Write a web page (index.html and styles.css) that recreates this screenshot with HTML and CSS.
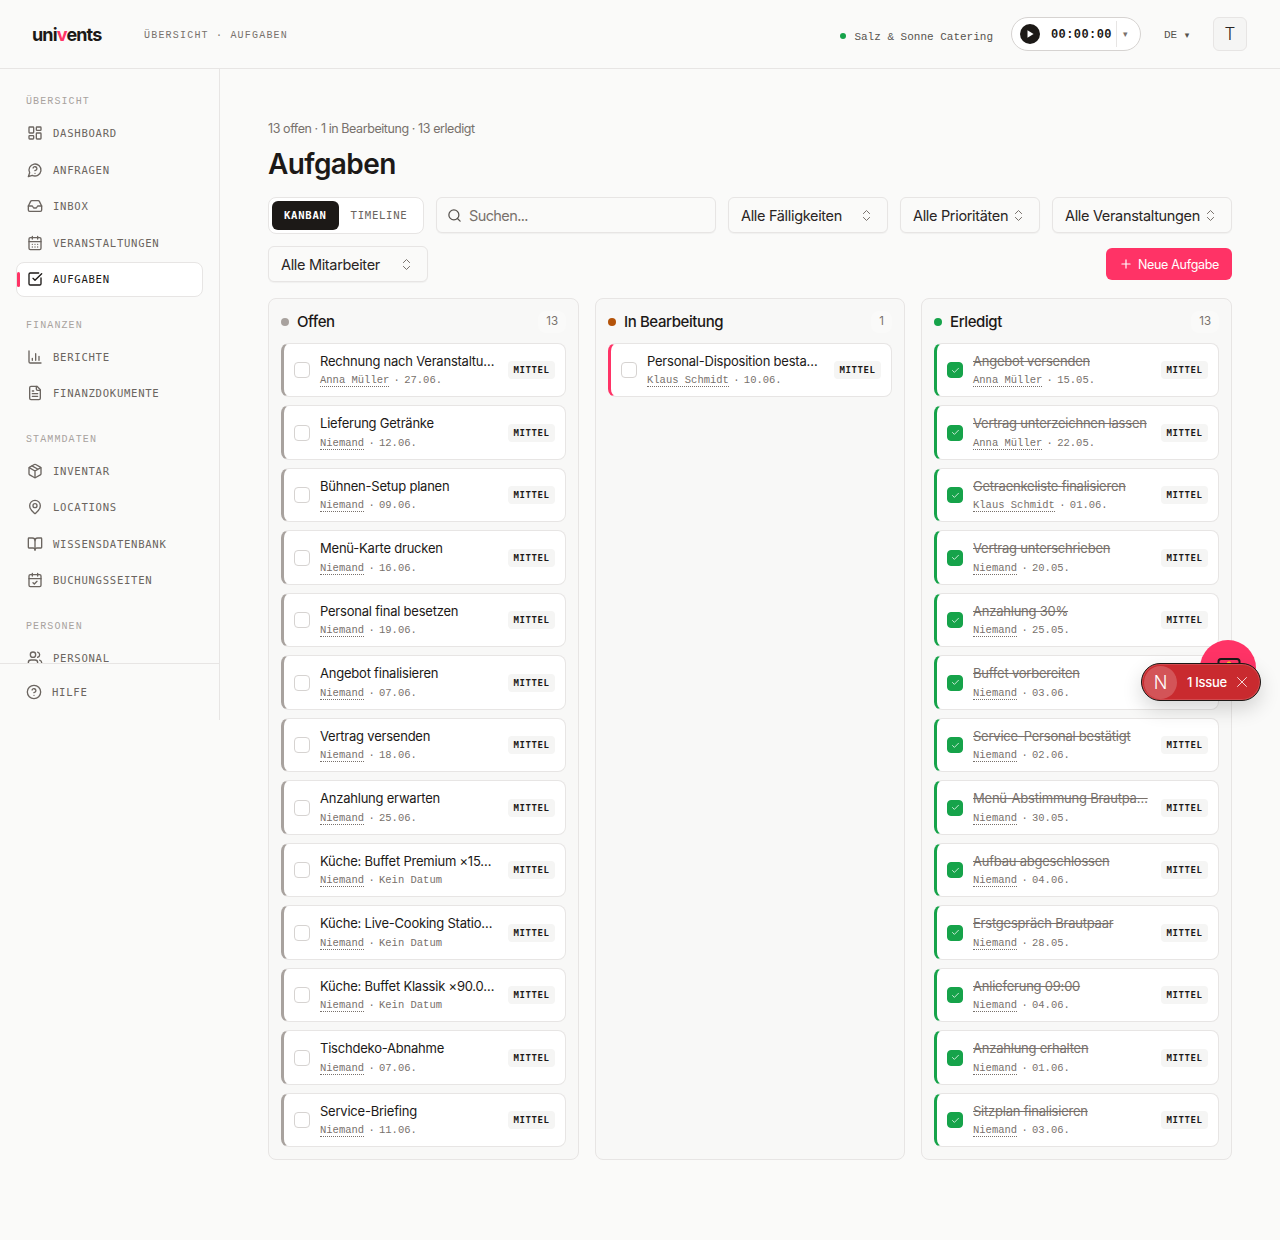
FILE: index.html
```html
<!DOCTYPE html>
<html lang="de">
<head>
<meta charset="utf-8">
<title>Aufgaben</title>
<link rel="stylesheet" href="styles.css">
</head>
<body>
<svg class="defs" width="0" height="0" aria-hidden="true">
  <symbol id="i-dash" viewBox="0 0 24 24"><rect x="3" y="3" width="7" height="9" rx="1"/><rect x="14" y="3" width="7" height="5" rx="1"/><rect x="14" y="12" width="7" height="9" rx="1"/><rect x="3" y="16" width="7" height="5" rx="1"/></symbol>
  <symbol id="i-ask" viewBox="0 0 24 24"><path d="M7.9 20A9 9 0 1 0 4 16.1L2 22Z"/><path d="M9.1 9a3 3 0 0 1 5.8 1c0 2-3 3-3 3"/><path d="M12 17h.01"/></symbol>
  <symbol id="i-inbox" viewBox="0 0 24 24"><path d="M22 12h-6l-2 3h-4l-2-3H2"/><path d="M5.45 5.11 2 12v6a2 2 0 0 0 2 2h16a2 2 0 0 0 2-2v-6l-3.45-6.89A2 2 0 0 0 16.76 4H7.24a2 2 0 0 0-1.79 1.11z"/></symbol>
  <symbol id="i-cal" viewBox="0 0 24 24"><rect x="3" y="4" width="18" height="18" rx="2"/><path d="M8 2v4M16 2v4M3 10h18M8 14h.01M12 14h.01M16 14h.01M8 18h.01M12 18h.01M16 18h.01"/></symbol>
  <symbol id="i-task" viewBox="0 0 24 24"><path d="M21 10.5V19a2 2 0 0 1-2 2H5a2 2 0 0 1-2-2V5a2 2 0 0 1 2-2h12.5"/><path d="m9 11 3 3L22 4"/></symbol>
  <symbol id="i-chart" viewBox="0 0 24 24"><path d="M3 3v16a2 2 0 0 0 2 2h16"/><path d="M8 17v-3M13 17V7M18 17V11"/></symbol>
  <symbol id="i-file" viewBox="0 0 24 24"><path d="M15 2H6a2 2 0 0 0-2 2v16a2 2 0 0 0 2 2h12a2 2 0 0 0 2-2V7Z"/><path d="M14 2v4a2 2 0 0 0 2 2h4M10 9H8M16 13H8M16 17H8"/></symbol>
  <symbol id="i-box" viewBox="0 0 24 24"><path d="M11 21.73a2 2 0 0 0 2 0l7-4A2 2 0 0 0 21 16V8a2 2 0 0 0-1-1.73l-7-4a2 2 0 0 0-2 0l-7 4A2 2 0 0 0 3 8v8a2 2 0 0 0 1 1.73z"/><path d="M12 22V12M3.29 7 12 12l8.71-5M7.5 4.27l9 5.15"/></symbol>
  <symbol id="i-pin" viewBox="0 0 24 24"><path d="M20 10c0 5-5.5 10.2-7.4 11.8a1 1 0 0 1-1.2 0C9.5 20.2 4 15 4 10a8 8 0 0 1 16 0"/><circle cx="12" cy="10" r="3"/></symbol>
  <symbol id="i-book" viewBox="0 0 24 24"><path d="M12 7v14"/><path d="M3 18a1 1 0 0 1-1-1V4a1 1 0 0 1 1-1h5a4 4 0 0 1 4 4 4 4 0 0 1 4-4h5a1 1 0 0 1 1 1v13a1 1 0 0 1-1 1h-6a3 3 0 0 0-3 3 3 3 0 0 0-3-3z"/></symbol>
  <symbol id="i-calc" viewBox="0 0 24 24"><rect x="3" y="4" width="18" height="18" rx="2"/><path d="M8 2v4M16 2v4M3 10h18M9 16l2 2 4-4"/></symbol>
  <symbol id="i-users" viewBox="0 0 24 24"><path d="M16 21v-2a4 4 0 0 0-4-4H6a4 4 0 0 0-4 4v2"/><circle cx="9" cy="7" r="4"/><path d="M22 21v-2a4 4 0 0 0-3-3.87M16 3.13a4 4 0 0 1 0 7.75"/></symbol>
  <symbol id="i-help" viewBox="0 0 24 24"><circle cx="12" cy="12" r="10"/><path d="M9.1 9a3 3 0 0 1 5.8 1c0 2-3 3-3 3M12 17h.01"/></symbol>
  <symbol id="i-updown" viewBox="0 0 24 24"><path d="m7 15 5 5 5-5M7 9l5-5 5 5"/></symbol>
  <symbol id="i-check" viewBox="0 0 24 24"><path d="M20 6 9 17l-5-5"/></symbol>
</svg>

<header class="topbar">
  <div class="logo">uni<span class="logo-v">v</span>ents</div>
  <div class="crumbs">ÜBERSICHT · AUFGABEN</div>
  <div class="topbar-right">
    <span class="org-dot"></span>
    <span class="org">Salz &amp; Sonne Catering</span>
    <div class="timer">
      <span class="play"><svg viewBox="0 0 10 10" width="10" height="10"><path class="play-tri" d="M2.5 1.2 8.6 5 2.5 8.8Z"/></svg></span>
      <span class="time">00:00:00</span>
      <span class="timer-caret">▾</span>
    </div>
    <div class="lang">DE <span class="lang-caret">▾</span></div>
    <div class="avatar">T</div>
  </div>
</header>

<div class="layout">
  <aside class="sidebar">
    <nav class="nav">
      <div class="nav-label nav-label-first">ÜBERSICHT</div>
      <a class="nav-item"><svg class="ico"><use href="#i-dash"/></svg>DASHBOARD</a>
      <a class="nav-item"><svg class="ico"><use href="#i-ask"/></svg>ANFRAGEN</a>
      <a class="nav-item"><svg class="ico"><use href="#i-inbox"/></svg>INBOX</a>
      <a class="nav-item"><svg class="ico"><use href="#i-cal"/></svg>VERANSTALTUNGEN</a>
      <a class="nav-item active"><svg class="ico"><use href="#i-task"/></svg>AUFGABEN</a>
      <div class="nav-label">FINANZEN</div>
      <a class="nav-item"><svg class="ico"><use href="#i-chart"/></svg>BERICHTE</a>
      <a class="nav-item"><svg class="ico"><use href="#i-file"/></svg>FINANZDOKUMENTE</a>
      <div class="nav-label">STAMMDATEN</div>
      <a class="nav-item"><svg class="ico"><use href="#i-box"/></svg>INVENTAR</a>
      <a class="nav-item"><svg class="ico"><use href="#i-pin"/></svg>LOCATIONS</a>
      <a class="nav-item"><svg class="ico"><use href="#i-book"/></svg>WISSENSDATENBANK</a>
      <a class="nav-item"><svg class="ico"><use href="#i-calc"/></svg>BUCHUNGSSEITEN</a>
      <div class="nav-label">PERSONEN</div>
      <a class="nav-item"><svg class="ico"><use href="#i-users"/></svg>PERSONAL</a>
    </nav>
    <div class="side-foot">
      <a class="nav-item foot-item"><svg class="ico"><use href="#i-help"/></svg>HILFE</a>
    </div>
  </aside>

  <main class="main">
    <p class="summary">13 offen · 1 in Bearbeitung · 13 erledigt</p>
    <h1 class="title">Aufgaben</h1>

    <div class="toolbar">
      <div class="toggle"><span class="tab tab-on">KANBAN</span><span class="tab">TIMELINE</span></div>
      <label class="search">
        <svg class="search-ico" viewBox="0 0 24 24"><circle cx="11" cy="11" r="8"/><path d="m21 21-4.3-4.3"/></svg>
        <span class="search-ph">Suchen...</span>
      </label>
      <div class="select sel-due">Alle Fälligkeiten<svg class="updown"><use href="#i-updown"/></svg></div>
      <div class="select sel-prio">Alle Prioritäten<svg class="updown"><use href="#i-updown"/></svg></div>
      <div class="select sel-event">Alle Veranstaltungen<svg class="updown"><use href="#i-updown"/></svg></div>
      <div class="select sel-staff">Alle Mitarbeiter<svg class="updown"><use href="#i-updown"/></svg></div>
      <button class="new-btn"><svg class="plus" viewBox="0 0 24 24"><path d="M5 12h14M12 5v14"/></svg>Neue Aufgabe</button>
    </div>

    <div class="board">
      <section class="col">
        <div class="col-head"><span class="dot dot-open"></span><span class="col-name">Offen</span><span class="count">13</span></div>
        <div class="cards">
          <article class="card open"><span class="box"></span><div class="body"><div class="t">Rechnung nach Veranstaltu…</div><div class="m"><span class="who">Anna Müller</span><span class="sep"> · </span>27.06.</div></div><span class="badge">MITTEL</span></article>
          <article class="card open"><span class="box"></span><div class="body"><div class="t">Lieferung Getränke</div><div class="m"><span class="who">Niemand</span><span class="sep"> · </span>12.06.</div></div><span class="badge">MITTEL</span></article>
          <article class="card open"><span class="box"></span><div class="body"><div class="t">Bühnen-Setup planen</div><div class="m"><span class="who">Niemand</span><span class="sep"> · </span>09.06.</div></div><span class="badge">MITTEL</span></article>
          <article class="card open"><span class="box"></span><div class="body"><div class="t">Menü-Karte drucken</div><div class="m"><span class="who">Niemand</span><span class="sep"> · </span>16.06.</div></div><span class="badge">MITTEL</span></article>
          <article class="card open"><span class="box"></span><div class="body"><div class="t">Personal final besetzen</div><div class="m"><span class="who">Niemand</span><span class="sep"> · </span>19.06.</div></div><span class="badge">MITTEL</span></article>
          <article class="card open"><span class="box"></span><div class="body"><div class="t">Angebot finalisieren</div><div class="m"><span class="who">Niemand</span><span class="sep"> · </span>07.06.</div></div><span class="badge">MITTEL</span></article>
          <article class="card open"><span class="box"></span><div class="body"><div class="t">Vertrag versenden</div><div class="m"><span class="who">Niemand</span><span class="sep"> · </span>18.06.</div></div><span class="badge">MITTEL</span></article>
          <article class="card open"><span class="box"></span><div class="body"><div class="t">Anzahlung erwarten</div><div class="m"><span class="who">Niemand</span><span class="sep"> · </span>25.06.</div></div><span class="badge">MITTEL</span></article>
          <article class="card open"><span class="box"></span><div class="body"><div class="t">Küche: Buffet Premium ×15…</div><div class="m"><span class="who">Niemand</span><span class="sep"> · </span>Kein Datum</div></div><span class="badge">MITTEL</span></article>
          <article class="card open"><span class="box"></span><div class="body"><div class="t">Küche: Live-Cooking Statio…</div><div class="m"><span class="who">Niemand</span><span class="sep"> · </span>Kein Datum</div></div><span class="badge">MITTEL</span></article>
          <article class="card open"><span class="box"></span><div class="body"><div class="t">Küche: Buffet Klassik ×90.0…</div><div class="m"><span class="who">Niemand</span><span class="sep"> · </span>Kein Datum</div></div><span class="badge">MITTEL</span></article>
          <article class="card open"><span class="box"></span><div class="body"><div class="t">Tischdeko-Abnahme</div><div class="m"><span class="who">Niemand</span><span class="sep"> · </span>07.06.</div></div><span class="badge">MITTEL</span></article>
          <article class="card open"><span class="box"></span><div class="body"><div class="t">Service-Briefing</div><div class="m"><span class="who">Niemand</span><span class="sep"> · </span>11.06.</div></div><span class="badge">MITTEL</span></article>
        </div>
      </section>

      <section class="col">
        <div class="col-head"><span class="dot dot-prog"></span><span class="col-name">In Bearbeitung</span><span class="count">1</span></div>
        <div class="cards">
          <article class="card prog"><span class="box"></span><div class="body"><div class="t">Personal-Disposition besta…</div><div class="m"><span class="who">Klaus Schmidt</span><span class="sep"> · </span>10.06.</div></div><span class="badge">MITTEL</span></article>
        </div>
      </section>

      <section class="col">
        <div class="col-head"><span class="dot dot-done"></span><span class="col-name">Erledigt</span><span class="count">13</span></div>
        <div class="cards">
          <article class="card done"><span class="box on"><svg class="tick"><use href="#i-check"/></svg></span><div class="body"><div class="t">Angebot versenden</div><div class="m"><span class="who">Anna Müller</span><span class="sep"> · </span>15.05.</div></div><span class="badge">MITTEL</span></article>
          <article class="card done"><span class="box on"><svg class="tick"><use href="#i-check"/></svg></span><div class="body"><div class="t">Vertrag unterzeichnen lassen</div><div class="m"><span class="who">Anna Müller</span><span class="sep"> · </span>22.05.</div></div><span class="badge">MITTEL</span></article>
          <article class="card done"><span class="box on"><svg class="tick"><use href="#i-check"/></svg></span><div class="body"><div class="t">Getraenkeliste finalisieren</div><div class="m"><span class="who">Klaus Schmidt</span><span class="sep"> · </span>01.06.</div></div><span class="badge">MITTEL</span></article>
          <article class="card done"><span class="box on"><svg class="tick"><use href="#i-check"/></svg></span><div class="body"><div class="t">Vertrag unterschrieben</div><div class="m"><span class="who">Niemand</span><span class="sep"> · </span>20.05.</div></div><span class="badge">MITTEL</span></article>
          <article class="card done"><span class="box on"><svg class="tick"><use href="#i-check"/></svg></span><div class="body"><div class="t">Anzahlung 30%</div><div class="m"><span class="who">Niemand</span><span class="sep"> · </span>25.05.</div></div><span class="badge">MITTEL</span></article>
          <article class="card done"><span class="box on"><svg class="tick"><use href="#i-check"/></svg></span><div class="body"><div class="t">Buffet vorbereiten</div><div class="m"><span class="who">Niemand</span><span class="sep"> · </span>03.06.</div></div><span class="badge">MITTEL</span></article>
          <article class="card done"><span class="box on"><svg class="tick"><use href="#i-check"/></svg></span><div class="body"><div class="t">Service-Personal bestätigt</div><div class="m"><span class="who">Niemand</span><span class="sep"> · </span>02.06.</div></div><span class="badge">MITTEL</span></article>
          <article class="card done"><span class="box on"><svg class="tick"><use href="#i-check"/></svg></span><div class="body"><div class="t">Menü-Abstimmung Brautpa…</div><div class="m"><span class="who">Niemand</span><span class="sep"> · </span>30.05.</div></div><span class="badge">MITTEL</span></article>
          <article class="card done"><span class="box on"><svg class="tick"><use href="#i-check"/></svg></span><div class="body"><div class="t">Aufbau abgeschlossen</div><div class="m"><span class="who">Niemand</span><span class="sep"> · </span>04.06.</div></div><span class="badge">MITTEL</span></article>
          <article class="card done"><span class="box on"><svg class="tick"><use href="#i-check"/></svg></span><div class="body"><div class="t">Erstgespräch Brautpaar</div><div class="m"><span class="who">Niemand</span><span class="sep"> · </span>28.05.</div></div><span class="badge">MITTEL</span></article>
          <article class="card done"><span class="box on"><svg class="tick"><use href="#i-check"/></svg></span><div class="body"><div class="t">Anlieferung 09:00</div><div class="m"><span class="who">Niemand</span><span class="sep"> · </span>04.06.</div></div><span class="badge">MITTEL</span></article>
          <article class="card done"><span class="box on"><svg class="tick"><use href="#i-check"/></svg></span><div class="body"><div class="t">Anzahlung erhalten</div><div class="m"><span class="who">Niemand</span><span class="sep"> · </span>01.06.</div></div><span class="badge">MITTEL</span></article>
          <article class="card done"><span class="box on"><svg class="tick"><use href="#i-check"/></svg></span><div class="body"><div class="t">Sitzplan finalisieren</div><div class="m"><span class="who">Niemand</span><span class="sep"> · </span>03.06.</div></div><span class="badge">MITTEL</span></article>
        </div>
      </section>
    </div>
  </main>
</div>

<div class="fab">
  <svg class="fab-ico" viewBox="0 0 24 24"><rect x="1.5" y="3" width="21" height="18" rx="2.5"/><path class="fab-spark" d="M12 5.5v3M10 7h4"/></svg>
</div>
<div class="issue">
  <span class="issue-n">N</span>
  <span class="issue-text">1 Issue</span>
  <svg class="issue-x" viewBox="0 0 24 24"><path d="M3 3l18 18M21 3 3 21"/></svg>
</div>
</body>
</html>
```
FILE: styles.css
```css
* { box-sizing: border-box; }
html, body { margin: 0; height: 1240px; overflow: hidden; }
body {
  position: relative;
  background: #fafaf9;
  color: #1c1917;
  font-family: Inter, "Liberation Sans", sans-serif;
}
.defs { position: absolute; }

.topbar {
  height: 69px;
  display: flex;
  align-items: center;
  padding: 0 33px 0 32px;
  border-bottom: 1px solid #e7e5e4;
}
.logo { width: 112px; font-size: 18px; font-weight: 700; letter-spacing: -0.85px; color: #1c1917; }
.logo-v { color: #ff3366; }
.crumbs { margin-top: 2px; font: 10px "Liberation Mono", monospace; letter-spacing: 1.2px; color: #78716c; }
.topbar-right { margin-left: auto; display: flex; align-items: center; }
.org-dot { width: 6px; height: 6px; border-radius: 50%; background: #16a34a; margin: 4px 8px 0 0; }
.org { font: 11px "Liberation Mono", monospace; color: #57534e; margin-top: 5px; }
.timer {
  margin-left: 18px;
  width: 130px; height: 34px;
  display: flex; align-items: center;
  padding-left: 8px;
  border: 1px solid #d6d3d1;
  border-radius: 17px;
  background: #fff;
}
.play { width: 20px; height: 20px; border-radius: 50%; background: #1c1917; display: flex; align-items: center; justify-content: center; }
.play-tri { fill: #fff; }
.time { margin-left: 11px; font: 700 12px/28px "Liberation Mono", monospace; letter-spacing: .42px; color: #1c1917; width: 66px; height: 26px; border-right: 1px solid #e7e5e4; }
.timer-caret { margin-left: 6px; font: 9px "DejaVu Sans", sans-serif; color: #78716c; }
.lang { margin: 2px 0 0 23px; width: 49px; font: 11px "Liberation Mono", monospace; color: #57534e; }
.lang-caret { font: 9px "DejaVu Sans", sans-serif; margin-left: 1px; }
.avatar {
  width: 34px; height: 34px;
  display: flex; align-items: center; justify-content: center;
  border: 1px solid #e7e5e4; border-radius: 6px;
  background: #f5f5f4; font-size: 17px; font-weight: 300; color: #292524;
}

.layout { display: flex; align-items: flex-start; }
.sidebar {
  width: 220px; height: 651px;
  flex: none;
  display: flex; flex-direction: column;
  border-right: 1px solid #e7e5e4;
}
.nav { height: 594px; flex: none; padding: 0 16px; overflow: hidden; }
.nav-label {
  height: 14px;
  margin: 22.5px 0 6px 10px;
  font: 10px/14px "Liberation Mono", monospace; letter-spacing: 1.1px; color: #a8a29e;
}
.nav-label-first { margin-top: 26px; margin-bottom: 6.5px; }
.nav-item {
  height: 35px; margin-bottom: 1.5px;
  display: flex; align-items: center; gap: 10px;
  padding-left: 10px;
  border: 1px solid transparent;
  border-radius: 8px;
  font: 10.6px "DejaVu Sans Mono", monospace; letter-spacing: .72px; color: #6b6560;
  position: relative;
}
.ico { width: 16px; height: 16px; flex: none; fill: none; stroke: currentColor; stroke-width: 2; stroke-linecap: round; stroke-linejoin: round; }
.nav-item.active { background: #fff; border-color: #e7e5e4; color: #1c1917; }
.nav-item.active::before {
  content: ""; position: absolute; left: 0; top: 9px;
  width: 3px; height: 15px; border-radius: 2px; background: #ff3366;
}
.side-foot { border-top: 1px solid #e7e5e4; padding: 10.5px 16px 0; flex: 1; min-height: 0; }
.foot-item { padding-left: 10px; margin-left: -1px; }

.main { flex: 1; min-width: 0; padding: 51px 48px 0; }
.summary { margin: 0; font-size: 12.5px; line-height: 18px; letter-spacing: -.42px; color: #78716c; }
.title { margin: 8px 0 15px; font-size: 28px; line-height: 36px; font-weight: 600; letter-spacing: -.6px; }

.toolbar { display: flex; flex-wrap: wrap; gap: 12px; align-items: flex-start; }
.toggle {
  width: 156px; height: 37px;
  display: flex; align-items: center;
  padding: 3px;
  background: #fff; border: 1px solid #e7e5e4; border-radius: 8px;
}
.tab { height: 29px; padding: 0 12px; font: 10.6px/29px "DejaVu Sans Mono", monospace; letter-spacing: .72px; color: #6b6560; border-radius: 6px; }
.tab-on { background: #1c1917; color: #fff; font-weight: 700; }
.search {
  width: 280px; height: 36px;
  display: flex; align-items: center; gap: 7px;
  padding-left: 10px;
  background: #fafaf9; border: 1px solid #e7e5e4; border-radius: 6px;
  box-shadow: 0 1px 1px rgba(0,0,0,.04);
}
.search-ico { width: 15px; height: 15px; fill: none; stroke: #57534e; stroke-width: 2; stroke-linecap: round; }
.search-ph { font-size: 14.5px; letter-spacing: -.6px; color: #78716c; }
.select {
  height: 36px;
  display: flex; align-items: center; justify-content: space-between;
  padding: 0 13px 0 12px;
  background: #fafaf9; border: 1px solid #e7e5e4; border-radius: 6px;
  box-shadow: 0 1px 1px rgba(0,0,0,.04);
  font-size: 14.5px; letter-spacing: -.33px; color: #292524;
}
.sel-due { width: 160px; }
.sel-prio { width: 140px; }
.sel-event { width: 180px; }
.sel-staff { width: 160px; }
.updown { width: 15px; height: 15px; flex: none; fill: none; stroke: #78716c; stroke-width: 1.6; stroke-linecap: round; stroke-linejoin: round; }
.new-btn {
  margin-left: auto;
  align-self: center;
  width: 126px; height: 32px;
  display: flex; align-items: center; justify-content: center; gap: 5px;
  border: 0; border-radius: 6px;
  background: #ff3366; color: #fff;
  font: 400 12.5px Inter, sans-serif; letter-spacing: -.3px;
}
.plus { width: 14px; height: 14px; fill: none; stroke: #fff; stroke-width: 2; stroke-linecap: round; }

.board { margin-top: 16px; display: grid; grid-template-columns: 311px 310px 311px; gap: 16px; align-items: stretch; }
.col {
  height: 862px;
  padding: 12px;
  background: #f8f8f7;
  border: 1px solid #e7e5e4;
  border-radius: 8px;
}
.col-head { height: 22px; margin-bottom: 9.8px; display: flex; align-items: center; gap: 8px; }
.dot { width: 8px; height: 8px; border-radius: 50%; flex: none; }
.dot-open { background: #a8a29e; }
.dot-prog { background: #b45309; }
.dot-done { background: #16a34a; }
.col-name { margin-bottom: 2px; font-size: 15px; font-weight: 500; letter-spacing: -.4px; color: #1c1917; }
.count { margin-left: auto; padding: 0 8px; height: 22px; line-height: 20px; font-size: 11.5px; color: #78716c; background: #fafaf9; border-radius: 8px; }
.cards { display: flex; flex-direction: column; gap: 8px; }
.card {
  height: 54.5px;
  display: flex; align-items: center; gap: 10px;
  padding: 0 10px 0 10px;
  background: #fff;
  border: 1px solid #e7e5e4;
  border-left-width: 3px;
  border-radius: 8px;
}
.card.open { border-left-color: #a8a29e; }
.card.prog { border-left-color: #ff3366; }
.card.done { border-left-color: #16a34a; }
.box {
  width: 16px; height: 16px; flex: none;
  display: flex; align-items: center; justify-content: center;
  border: 1px solid #d6d3d1; border-radius: 4px; background: #fff;
}
.box.on { background: #16a34a; border-color: #16a34a; }
.tick { width: 9px; height: 9px; fill: none; stroke: #fff; stroke-width: 2; stroke-linecap: round; stroke-linejoin: round; }
.body { flex: 1; min-width: 0; margin-bottom: .5px; }
.t { font-size: 13px; line-height: 18px; letter-spacing: -.22px; white-space: nowrap; color: #1c1917; }
.done .t { color: #78716c; text-decoration: line-through; }
.m { margin-top: 3.5px; font: 10.5px/15px "Liberation Mono", monospace; color: #78716c; white-space: nowrap; }
.who { border-bottom: 1px dotted #78716c; }
.sep { word-spacing: -2px; }
.badge {
  flex: none;
  width: 47px; height: 18px;
  display: flex; align-items: center; justify-content: center;
  background: #f5f5f4; border-radius: 4px;
  font: 9px "DejaVu Sans Mono", monospace; font-weight: 700; letter-spacing: .6px; color: #1c1917;
}

.fab { position: absolute; left: 1200px; top: 640px; width: 56px; height: 56px; border-radius: 50%; background: #ff3366; }
.fab-ico { position: absolute; left: 17px; top: 16px; width: 24px; height: 24px; fill: none; stroke: #1c1917; stroke-width: 2; }
.fab-spark { stroke: #fbbf24; stroke-width: 2; }
.issue {
  position: absolute; left: 1141px; top: 663px;
  width: 120px; height: 38px;
  display: flex; align-items: center;
  padding-left: 2px;
  background: #c92a2f;
  border: 1px solid #1c1917;
  border-radius: 19px;
  box-shadow: 0 0 0 1px rgba(255,255,255,.15) inset, 0 8px 20px rgba(0,0,0,.16);
}
.issue-n {
  width: 33px; height: 33px; border-radius: 50%;
  display: flex; align-items: center; justify-content: center;
  background: rgba(255,255,255,.2);
  color: #fff; font-size: 18px; font-weight: 300;
}
.issue-text { margin-left: 10px; font-size: 13px; font-weight: 500; letter-spacing: -.3px; color: #fff; }
.issue-x { margin-left: 9px; width: 12px; height: 12px; fill: none; stroke: #fff; stroke-width: 1.6; stroke-linecap: round; }
```
